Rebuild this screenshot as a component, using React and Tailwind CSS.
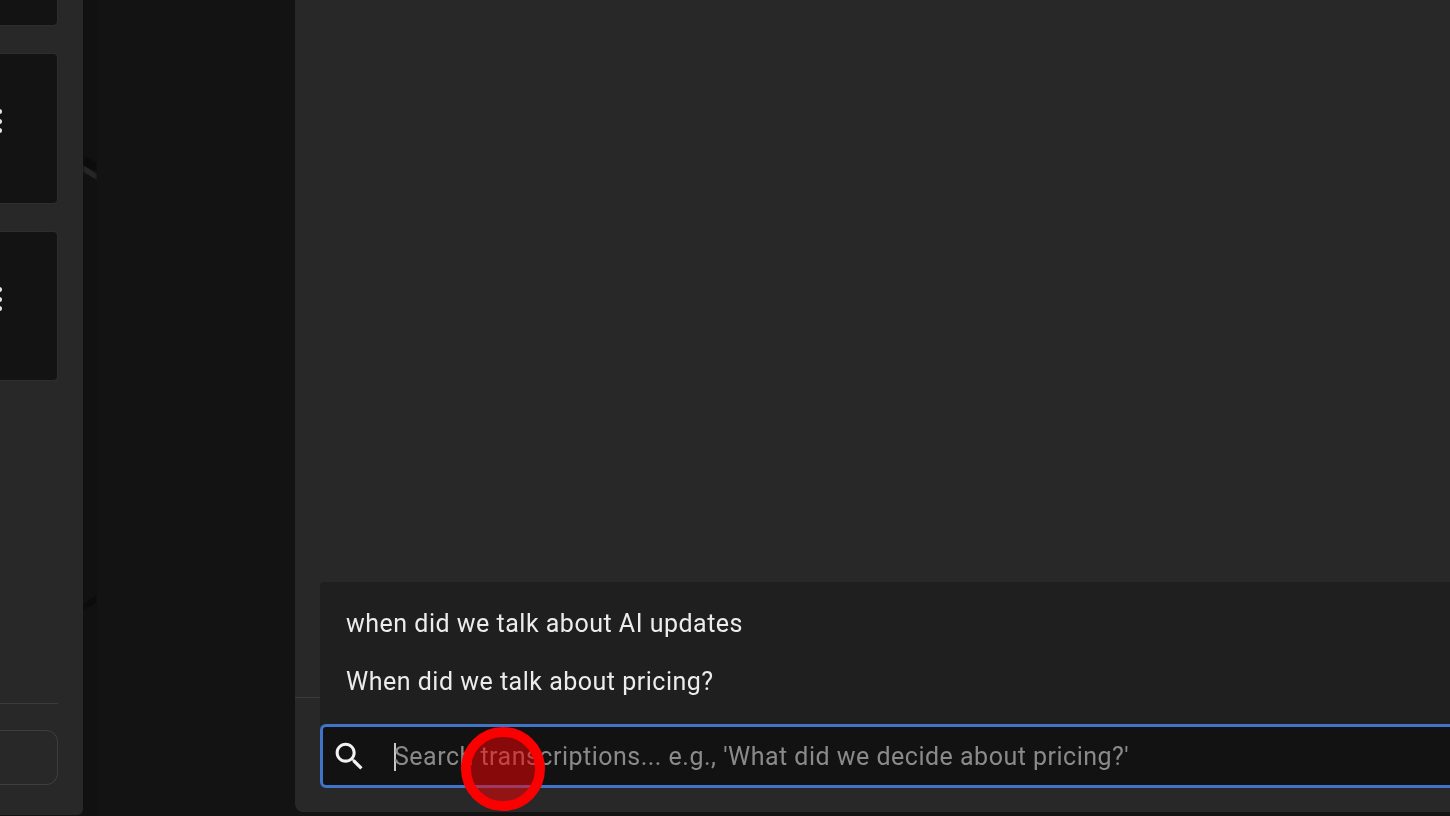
const dots = [0, 1, 2]

function SideCard({ className }) {
  return (
    <div className={`flex w-[57px] shrink-0 flex-col items-start rounded-r-[4px] bg-[#131313] shadow-[0_0_0_1px_#2e2e2e] ${className}`}>
      <div className="-ml-[3px] mt-[55px] flex flex-col gap-[4.5px] blur-[0.5px]">
        {dots.map((d) => (
          <span key={d} className="h-[5px] w-[5px] rounded-full bg-[#e4e4e4]" />
        ))}
      </div>
    </div>
  )
}

export default function App() {
  return (
    <div className="relative flex h-[816px] w-[1450px] overflow-hidden bg-[#131313] font-['Roboto',sans-serif]">
      {/* Sidebar, cut off by the left edge */}
      <aside className="flex h-[815px] w-[83px] shrink-0 flex-col overflow-hidden rounded-br-[6px] bg-[#282828]">
        <div className="h-[25px] w-[57px] shrink-0 rounded-br-[4px] bg-[#131313] shadow-[0_0_0_1px_#2e2e2e]" />
        <SideCard className="mt-[29px] h-[149px]" />
        <SideCard className="mt-[29px] h-[148px]" />
        <div className="mt-auto w-[58px] border-t border-[#3c3c3c] pt-[26px] pb-[30px]">
          <div className="h-[55px] rounded-r-[12px] border border-l-0 border-[#3e3e3e]" />
        </div>
      </aside>

      {/* Collapse handle next to the sidebar */}
      <div className="absolute left-[83px] top-0 h-[816px] w-[14px] bg-[#111111]" />
      <div className="absolute left-[83px] top-[155px] h-[22px] w-[14px] bg-[#0c0c0c] blur-[1.5px] [clip-path:polygon(0_0,100%_35%,100%_70%,0_50%)]" />
      <div className="absolute left-[83px] top-[165px] h-[15px] w-[14px] bg-[#262626] blur-[1.5px] [clip-path:polygon(0_0,100%_60%,100%_100%,0_45%)]" />
      <div className="absolute left-[83px] top-[595px] h-[16px] w-[14px] bg-[#0c0c0c] blur-[1.5px] [clip-path:polygon(100%_0,100%_45%,0_100%,0_55%)]" />

      {/* Main panel */}
      <main className="ml-[212px] flex h-[812px] min-w-0 flex-1 flex-col justify-end rounded-bl-[8px] bg-[#282828]">
        <div className="relative h-[115px] shrink-0 border-t border-[#3a3a3a] pl-[25px] pt-[26px]">
          {/* Suggestions */}
          <div className="absolute bottom-[87px] left-[25px] w-[1200px] rounded-t-[4px] bg-[#1f1f1f] pb-[14px] pt-[13px] pl-[26px] text-[25px] leading-[58px] tracking-[0.5px] text-[#ececec]">
            <div className="blur-[0.5px]">when did we talk about AI updates</div>
            <div className="blur-[0.5px]">When did we talk about pricing?</div>
          </div>
          {/* Search input */}
          <div className="relative flex h-[64px] w-[1200px] items-center rounded-[6px] border-[3px] border-[#3f74c9] bg-[#121212] pl-[8px]">
            <svg viewBox="0 0 24 24" className="h-[37px] w-[37px] shrink-0 fill-[#f2f2f2] blur-[0.5px]">
              <path d="M15.5 14h-.79l-.28-.27C15.41 12.59 16 11.11 16 9.5 16 5.91 13.09 3 9.5 3S3 5.91 3 9.5 5.91 16 9.5 16c1.61 0 3.09-.59 4.23-1.57l.27.28v.79l5 4.99L20.49 19l-4.99-5zm-6 0C7.01 14 5 11.99 5 9.5S7.01 5 9.5 5 14 7.01 14 9.5 11.99 14 9.5 14z" />
            </svg>
            <span className="ml-[26px] mt-[2px] h-[28px] w-[2px] bg-[#c8c8c8]" />
            <span className="-ml-[2px] mt-[2px] text-[25px] tracking-[0.49px] text-[#8a8a8a] blur-[0.5px]">
              Search transcriptions... e.g., 'What did we decide about pricing?'
            </span>
          </div>
        </div>
      </main>

      {/* Click marker */}
      <div className="absolute left-[461px] top-[727px] h-[84px] w-[84px] rounded-full border-[10px] border-[#fb0000] bg-[#fb0000]/50" />
    </div>
  )
}
